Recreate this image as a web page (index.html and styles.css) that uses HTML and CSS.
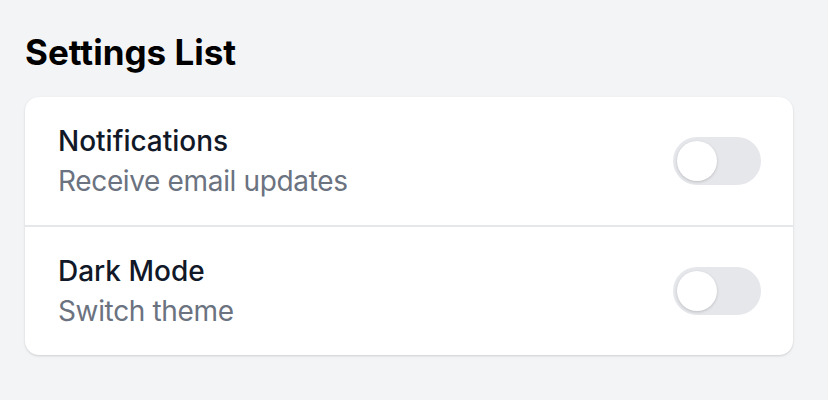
FILE: index.html
```html
<!DOCTYPE html>
<html lang="en">
<head>
  <meta charset="UTF-8">
  <title>Settings List</title>
  <link rel="stylesheet" href="styles.css">
</head>
<body>

  <div class="page">
    <h2 class="page-title">Settings List</h2>

    <!-- Settings card -->
    <div class="settings-card">
      <div class="setting-row">
        <div class="setting-text">
          <div class="setting-name">Notifications</div>
          <div class="setting-desc">Receive email updates</div>
        </div>
        <button class="toggle" aria-label="Notifications"><span class="knob"></span></button>
      </div>

      <div class="setting-row">
        <div class="setting-text">
          <div class="setting-name">Dark Mode</div>
          <div class="setting-desc">Switch theme</div>
        </div>
        <button class="toggle" aria-label="Dark Mode"><span class="knob"></span></button>
      </div>
    </div>
  </div>

</body>
</html>
```

FILE: styles.css
```css
/* Global & Body */
body {
  margin: 0;
  background: #f3f4f6;
  font-family: Inter, "Noto Sans", sans-serif;
  color: #111827;
}

.page {
  padding: 24px 25px;
  width: 768px;
}

/* Heading */
.page-title {
  margin: 0 0 17px;
  font-size: 35px;
  line-height: 56px;
  font-weight: 700;
  color: #000;
}

/* Card */
.settings-card {
  background: #fff;
  border-radius: 14px;
  box-shadow: 0 1px 3px rgba(0,0,0,0.1), 0 1px 2px rgba(0,0,0,0.06);
  overflow: hidden;
}

.setting-row {
  display: flex;
  align-items: center;
  justify-content: space-between;
  padding: 24px 32px 24px 33px;
}
.setting-row + .setting-row {
  border-top: 2px solid #e5e7eb;
}

.setting-name {
  font-size: 28px;
  line-height: 40px;
  font-weight: 500;
  color: #111827;
}
.setting-desc {
  font-size: 28px;
  line-height: 40px;
  letter-spacing: -0.35px;
  color: #6b7280;
}

/* Toggle switch */
.toggle {
  width: 88px;
  height: 48px;
  padding: 4px;
  border: none;
  border-radius: 24px;
  background: #e5e7eb;
  display: flex;
  align-items: center;
  cursor: pointer;
}
.knob {
  width: 40px;
  height: 40px;
  border-radius: 50%;
  background: #fff;
  box-shadow: 0 1px 3px rgba(0,0,0,0.18);
}
```
